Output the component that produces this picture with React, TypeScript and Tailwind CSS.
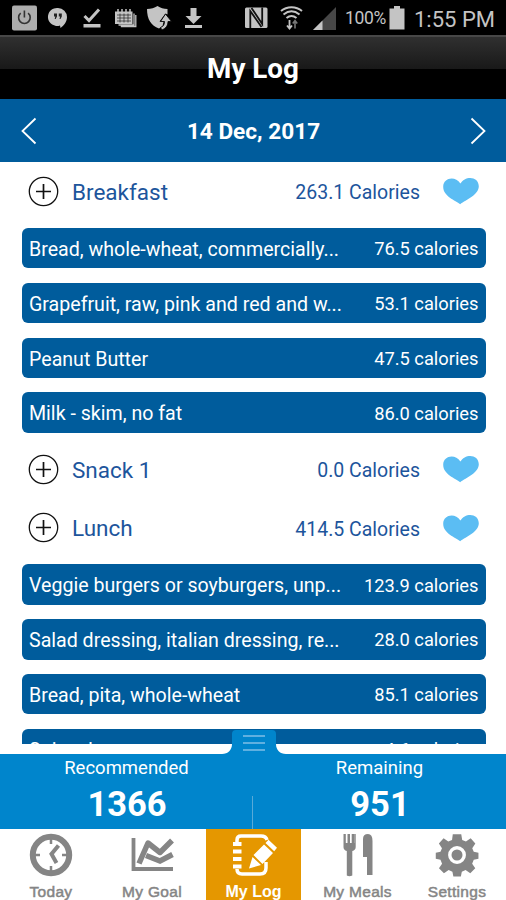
import type { ReactNode } from 'react'

interface Entry {
  name: string
  calories: string
}

interface Meal {
  title: string
  total: string
  entries: Entry[]
}

const MEALS: Meal[] = [
  {
    title: 'Breakfast',
    total: '263.1',
    entries: [
      { name: 'Bread, whole-wheat, commercially...', calories: '76.5' },
      { name: 'Grapefruit, raw, pink and red and w...', calories: '53.1' },
      { name: 'Peanut Butter', calories: '47.5' },
      { name: 'Milk - skim, no fat', calories: '86.0' },
    ],
  },
  { title: 'Snack 1', total: '0.0', entries: [] },
  {
    title: 'Lunch',
    total: '414.5',
    entries: [
      { name: 'Veggie burgers or soyburgers, unp...', calories: '123.9' },
      { name: 'Salad dressing, italian dressing, re...', calories: '28.0' },
      { name: 'Bread, pita, whole-wheat', calories: '85.1' },
      { name: 'Spinach', calories: '4.6' },
    ],
  },
]

function StatusBar() {
  return (
    <div className="h-[35px] bg-black flex items-center text-[#c4c4c4] shrink-0">
      {/* Notifications */}
      <svg className="w-[220px] h-[35px] shrink-0" viewBox="0 0 220 35" fill="currentColor">
        <rect x="12" y="5.5" width="25" height="25" rx="2" fill="#adadad" />
        <path d="M20.7 13.2a5.8 5.8 0 1 0 7.4 0M24.4 10.5v7" fill="none" stroke="#333" strokeWidth="1.6" />
        <path d="M58 8a9 9 0 0 1 9 9c0 5-3.2 8.500-6.500 11l-.5-2.600A9 9 0 1 1 58 8z" />
        <path d="M54 13.500h3v3l-1.300 2.500h-1l.6-2.500H54zM58.800 13.500h3v3l-1.300 2.500h-1l.6-2.500h-1.300z" fill="#222" />
        <path d="M84.500 16l4.500 4.500L99 9.500" fill="none" stroke="currentColor" strokeWidth="3" />
        <rect x="83.500" y="24" width="17" height="3.500" />
        <rect x="115" y="11.500" width="17.500" height="12.500" />
        <path d="M118 9v4M122 9v4M126 9v4M130 9v4" stroke="currentColor" strokeWidth="1.500" />
        <path d="M117 15h14M117 18h14M117 21h14M120 13.500v9M124 13.500v9M128 13.500v9" stroke="#222" strokeWidth="0.700" />
        <path d="M134 13.500v11.500h-15.500M135.800 15v11.500h-15" fill="none" stroke="currentColor" strokeWidth="1.300" />
        <path d="M147 9c4 0 7.500-1 10.500-3 3 2 6 3 10 3v5.500l-2-1-6 8 4 .5-1 4-3.500 2.500c-8-2.500-12-9.500-12-19.500z" />
        <path d="M165.500 14l6 7.500h-3.500c0 4-2 6.500-6 8.500l-1.500-2.500c3-1 4-3 4-6h-4z" stroke="#000" strokeWidth="0.800" />
        <path d="M190.500 8h6v8h5l-8 8-8-8h5zM185 25h17v3h-17z" />
      </svg>
      <svg className="w-[120px] h-[35px] shrink-0 ml-[3px]" viewBox="223 0 120 35" fill="currentColor">
        <rect x="245" y="7.500" width="22.500" height="20.500" rx="1.500" />
        <path d="M250.300 28V11l11.200 16" fill="none" stroke="#111" strokeWidth="1.800" />
        <path d="M262.200 7.500V24L251.500 8" fill="none" stroke="#111" strokeWidth="1.800" />
        <path d="M281 11c6-5 15-5 21 0M283.500 14.500c5-4 11-4 16 0M286.500 18c3-2.500 7-2.500 10 0" fill="none" stroke="currentColor" strokeWidth="2" />
        <path d="M289.500 20v8M287 25.500l2.500 3 2.500-3" fill="none" stroke="currentColor" strokeWidth="1.800" />
        <path d="M295 28.500v-7M292.800 23.500l2.200-3 2.200 3" fill="none" stroke="#777" strokeWidth="1.600" />
        <path d="M336 7v23h-23z" fill="#474747" />
        <path d="M322.500 20.500V30H313z" />
      </svg>
      <span className="w-[44px] ml-[2px] mt-[2px] font-['Roboto'] text-[17.500px] tracking-[-0.300px]">100%</span>
      <svg className="w-[16px] h-[24px] shrink-0" viewBox="0 0 16 24" fill="currentColor">
        <path d="M5 0h6v2.500h4.500V23.500H.5V2.500H5z" />
      </svg>
      <span className="ml-[9px] mt-[3px] font-['Roboto'] text-[22px] whitespace-nowrap">1:55 PM</span>
    </div>
  )
}

function Heart() {
  return (
    <svg className="w-[36px] h-[28px] shrink-0" viewBox="0 0 36 28" fill="#5bbdf3">
      <path d="M17.200 27.200C12.500 23.500.2 19.500.2 9.800c0-9 12-11.300 17.200-3.200C21.800-1.600 35.800-1.200 35.800 9.300c0 8.500-12.500 13.500-18.600 17.900z" />
    </svg>
  )
}

function MealHeader({ title, total }: { title: string; total: string }) {
  return (
    <div className="h-[58.500px] pl-[28px] pr-[27px] flex items-center text-[#1d559c] font-['Roboto']">
      <svg className="w-[31px] h-[31px] shrink-0" viewBox="0 0 31 31" fill="none" stroke="#111">
        <circle cx="15.500" cy="15.500" r="14.200" strokeWidth="1.300" />
        <path d="M8 15.500h15M15.500 8v15" strokeWidth="1.700" />
      </svg>
      <span className="ml-[13px] mt-[3px] text-[22.500px]">{title}</span>
      <span className="ml-auto mr-[23px] mt-[3px] text-[19.500px]">{total} Calories</span>
      <Heart />
    </div>
  )
}

function EntryRow({ name, calories }: Entry) {
  return (
    <div className="h-[40.300px] mt-[7.300px] mb-[7.300px] ml-[22px] mr-[20.500px] rounded-[6px] bg-[#005c9c] px-[7px] flex items-center justify-between text-white font-['Roboto'] whitespace-nowrap">
      <span className="mt-[3px] text-[19.600px]">{name}</span>
      <span className="mt-[1.500px] text-[18.300px]">{calories} calories</span>
    </div>
  )
}

function Total({ label, value }: { label: string; value: string }) {
  return (
    <div className="flex-1 flex flex-col items-center text-white font-['Roboto']">
      <span className="mt-[2px] text-[18.500px] leading-[24px]">{label}</span>
      <span className="mt-[5px] ml-[1px] text-[34.500px] leading-[38px] font-bold">{value}</span>
    </div>
  )
}

function Tab({ label, active, children }: { label: string; active?: boolean; children: ReactNode }) {
  return (
    <div
      className={`flex flex-col items-center pt-[4px] font-['Liberation_Sans'] ${
        active
          ? 'ml-[4px] bg-[#e59700] text-white font-bold text-[16px]'
          : 'text-[#858585] text-[15.500px] tracking-[0.300px] [-webkit-text-stroke:0.5px_#858585]'
      }`}
    >
      <svg className="w-[46px] h-[45px] shrink-0" viewBox="0 0 46 45" fill="currentColor">
        {children}
      </svg>
      <span className="mt-[5px] leading-[18px] whitespace-nowrap">{label}</span>
    </div>
  )
}

export default function App() {
  return (
    <div className="w-[506px] h-[900px] bg-white flex flex-col overflow-hidden">
      <StatusBar />

      {/* Title */}
      <div className="h-[64px] shrink-0 flex items-center justify-center border-t-2 border-[#484848] bg-[linear-gradient(to_bottom,#303030_0%,#191919_51%,#000_52%,#000_100%)]">
        <h1 className="mt-[1px] font-['Roboto'] font-bold text-[27.800px] text-white">My Log</h1>
      </div>

      {/* Date picker */}
      <div className="h-[63px] shrink-0 bg-[#005c9c] pl-[21px] pr-[20px] flex items-center justify-between text-white">
        <svg className="w-[16px] h-[28px]" viewBox="0 0 16 28" fill="none" stroke="currentColor" strokeWidth="1.800">
          <path d="M14.500 1.500L1.500 14l13 12.500" />
        </svg>
        <span className="mt-[2px] font-['Roboto'] font-bold text-[22.600px]">14 Dec, 2017</span>
        <svg className="w-[16px] h-[28px]" viewBox="0 0 16 28" fill="none" stroke="currentColor" strokeWidth="1.800">
          <path d="M1.500 1.500l13 12.500-13 12.500" />
        </svg>
      </div>

      {/* Meals */}
      <div className="h-[582px] shrink-0 overflow-hidden">
        {MEALS.map((meal) => (
          <div key={meal.title} className="flow-root">
            <MealHeader title={meal.title} total={meal.total} />
            <div className="flex flex-col">
              {meal.entries.map((entry) => (
                <EntryRow key={entry.name} {...entry} />
              ))}
            </div>
          </div>
        ))}
      </div>

      {/* Daily totals */}
      <div className="relative mt-[10px] h-[75px] shrink-0 bg-[#0085cc] flex">
        <svg className="absolute left-[222px] top-[-24px] w-[64px] h-[25px]" viewBox="0 0 64 25">
          <path d="M0 25v-1c6 0 10-4 10-10V4q0-4 4-4h36q4 0 4 4v10c0 6 4 10 10 10v1z" fill="#0085cc" />
          <path d="M21 6h22M21 13h22M21 20h22" stroke="#7fbfe6" strokeWidth="1.500" />
        </svg>
        <Total label="Recommended" value="1366" />
        <div className="absolute left-[252px] bottom-0 w-px h-[33px] bg-[#58aad8]" />
        <Total label="Remaining" value="951" />
      </div>

      {/* Tabs */}
      <div className="h-[71px] shrink-0 grid grid-cols-[102px_100px_99px_113px_86px]">
        <Tab label="Today">
          <circle cx="23" cy="22" r="18.200" fill="none" stroke="currentColor" strokeWidth="6" />
          <path d="M23 5v6M23 33v6M6 22h6M34 22h6" stroke="currentColor" strokeWidth="2.500" />
          <path d="M30.500 12.500L23.500 21l5 9" fill="none" stroke="currentColor" strokeWidth="4" />
        </Tab>
        <Tab label="My Goal">
          <path d="M4.500 5v31H44" fill="none" stroke="currentColor" strokeWidth="3.800" />
          <path d="M10 30.500L19 10l12 9.500L43 7.500" fill="none" stroke="currentColor" strokeWidth="5.500" strokeLinejoin="round" />
          <path d="M17 22.500l14 5.500 12.500-6.500" fill="none" stroke="currentColor" strokeWidth="5.500" />
        </Tab>
        <Tab label="My Log" active>
          <path d="M6 9V7q0-4 4-4h20q5 0 6 4M6 36q0 5 5 5h18q6 0 6-6v-6" fill="none" stroke="currentColor" strokeWidth="3.500" />
          <path d="M2 11h8.500M2 18.500h8.500M2 26h8.500M2 33.500h8.500" stroke="currentColor" strokeWidth="4.200" />
          <path d="M18 35.500l3.500-11.500 8.500 8zM22.500 22L33 11.500l9 8.500L31.500 31zM34.500 10l3-3.200 8.500 8-2.800 3.400z" />
        </Tab>
        <Tab label="My Meals">
          <path d="M8.500 1h2.300v9h1.700V1H15v9h1.700V1H19v9h.2V1h1.500v13q0 3-3.400 4v24.500q-3 1.500-5.500 0V18q-3.300-1-3.300-4z" />
          <path d="M28 24V6q0-5 5-5 4.500 0 4.500 7v34h-5.500V24z" />
        </Tab>
        <Tab label="Settings">
          <path
            transform="translate(1.400 1.300) scale(.94)"
            fillRule="evenodd"
            d="M18.500 0h9l1 6 4 1.700 5-3.500 5 5.600-3.300 5 1.600 3.700 5 1v6.500l-5 1.200-1.700 4 3.300 5-5.300 5.300-5-3.400-4 1.700-1 5.200h-8l-1-5.200-4-1.700-5 3.400-5.300-5.300 3.300-5-1.700-4-5-1.200V19.500l5-1 1.600-3.700-3.300-5 5-5.600 5 3.500 4-1.700zM23 12.500a9.500 9.500 0 1 0 0 19 9.500 9.500 0 0 0 0-19z"
          />
          <circle cx="23" cy="22" r="5.500" />
        </Tab>
      </div>
    </div>
  )
}
